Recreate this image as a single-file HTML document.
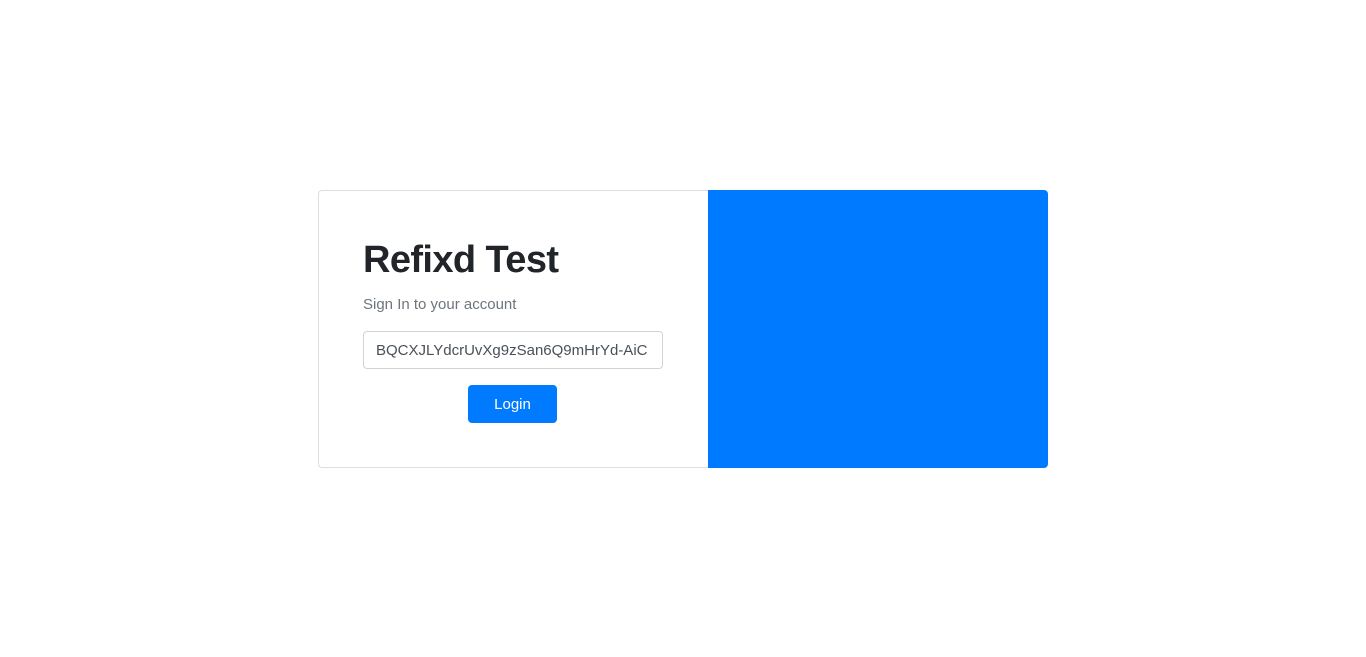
<!DOCTYPE html>
<html><head><style>
body{margin:0;width:1366px;height:657px;background:#fff;font-family:"Liberation Sans",sans-serif;position:relative}
.card{position:absolute;left:318px;top:190px;width:389px;height:276px;border:1px solid #dfdfdf;border-right:none;border-radius:4px 0 0 4px}
.blue{position:absolute;left:708px;top:190px;width:340px;height:278px;background:#007bff;border-radius:0 4px 4px 0}
h1{position:absolute;left:363px;top:239px;margin:0;font-size:38px;font-weight:bold;letter-spacing:-0.6px;color:#212529}
.sub{position:absolute;left:363px;top:296px;font-size:15px;color:#6c757d}
.inp{position:absolute;left:363px;top:331px;width:300px;height:38px;border:1px solid #ced4da;border-radius:4px;box-sizing:border-box;font-size:15px;color:#495057;line-height:38px;padding-left:12px;white-space:nowrap;overflow:hidden}
.btn{position:absolute;left:468px;top:385px;width:89px;height:38px;background:#007bff;border-radius:4px;color:#fff;font-size:15px;line-height:40px;text-align:center}
</style></head><body>
<div class="card"></div><div class="blue"></div>
<h1>Refixd Test</h1>
<div class="sub">Sign In to your account</div>
<div class="inp">BQCXJLYdcrUvXg9zSan6Q9mHrYd-AiC</div>
<div class="btn">Login</div>
</body></html>
